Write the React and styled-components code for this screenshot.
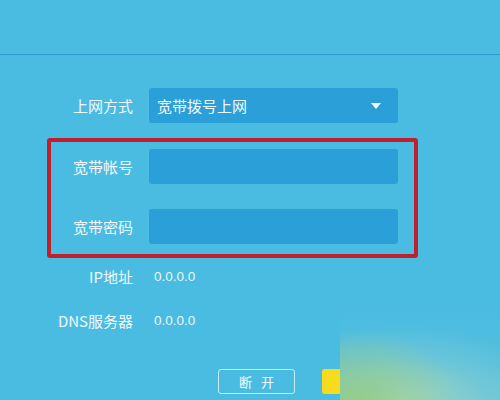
import React from "react";
import styled, { createGlobalStyle } from "styled-components";

const Global = createGlobalStyle`
  html, body { margin: 0; padding: 0; }
  body { background: #4bbce1; }
  * { box-sizing: border-box; }
`;

const Page = styled.div`
  position: relative;
  width: 500px;
  height: 400px;
  overflow: hidden;
  background: #4bbce1;
  font-family: "Noto Sans CJK SC", "Noto Sans", sans-serif;
  color: #eef8fc;
`;

const Header = styled.div`
  height: 55px;
  border-bottom: 1px solid #2f9dcc;
`;

const Form = styled.div`
  display: flex;
  flex-direction: column;
  margin-left: 47px;
  padding-top: 33px;
`;

const Row = styled.div`
  display: flex;
  align-items: center;
  gap: 16px;
  height: ${(p) => p.$h || 35}px;
  padding-left: ${(p) => (p.$inset ? 4 : 0)}px;
  margin-top: ${(p) => p.$mt || 0}px;
`;

const Label = styled.div`
  width: 82px;
  text-align: right;
  font-size: 15px;
  white-space: nowrap;
`;

const Field = styled.div`
  position: relative;
  width: 249px;
  height: 35px;
  border-radius: 3px;
  background: #2b9fd8;
  display: flex;
  align-items: center;
  padding-left: 8px;
  font-size: 15px;
`;

const Arrow = styled.span`
  position: absolute;
  right: 17px;
  top: 15px;
  width: 0;
  height: 0;
  border-left: 5px solid transparent;
  border-right: 5px solid transparent;
  border-top: 6px solid #f4fbfe;
`;

const Highlight = styled.div`
  width: 371px;
  margin-top: 15px;
  border: 4px solid #c21f2d;
  border-radius: 3px;
  padding: 7px 16px 10px 0;
  display: flex;
  flex-direction: column;
  gap: 25px;
`;

const Value = styled.div`
  margin-left: 5px;
  font-size: 13.5px;
  font-family: "Liberation Sans", "Noto Sans CJK SC", sans-serif;
  color: #eaf6fb;
`;

const Buttons = styled.div`
  display: flex;
  gap: 27px;
  margin-top: 37px;
  padding-left: 171px;
`;

const Button = styled.div`
  width: 77px;
  height: 25px;
  border-radius: 3px;
  display: flex;
  align-items: center;
  justify-content: center;
  font-size: 13px;
  letter-spacing: 3px;
  padding-left: 3px;
  ${(p) =>
    p.$primary
      ? `background: #f6dc1c; color: #3a3a3a;`
      : `border: 1.5px solid #c8ecf8; color: #f4fbfe;`}
`;

const Glow = styled.div`
  position: absolute;
  left: 340px;
  top: 316px;
  right: 0;
  bottom: 0;
  background:
    radial-gradient(ellipse 100px 70px at 10% 100%, rgba(150, 204, 130, 0.9), rgba(150, 204, 130, 0) 100%),
    radial-gradient(ellipse 140px 75px at 38% 100%, rgba(172, 214, 190, 0.9), rgba(130, 205, 212, 0.45) 60%, rgba(75, 188, 225, 0) 100%),
    linear-gradient(to bottom, #4bbce1 0%, #56bfdc 55%, #6cc5d6 100%);
`;

export default function App() {
  return (
    <Page>
      <Global />
      <Header />
      <Form>
        <Row $inset>
          <Label>上网方式</Label>
          <Field>
            宽带拨号上网
            <Arrow />
          </Field>
        </Row>
        <Highlight>
          <Row>
            <Label>宽带帐号</Label>
            <Field />
          </Row>
          <Row>
            <Label>宽带密码</Label>
            <Field />
          </Row>
        </Highlight>
        <Row $inset $h={24} $mt={6}>
          <Label>IP地址</Label>
          <Value>0.0.0.0</Value>
        </Row>
        <Row $inset $h={24} $mt={20}>
          <Label>DNS服务器</Label>
          <Value>0.0.0.0</Value>
        </Row>
        <Buttons>
          <Button>断 开</Button>
          <Button $primary>连 接</Button>
        </Buttons>
      </Form>
      <Glow />
    </Page>
  );
}
